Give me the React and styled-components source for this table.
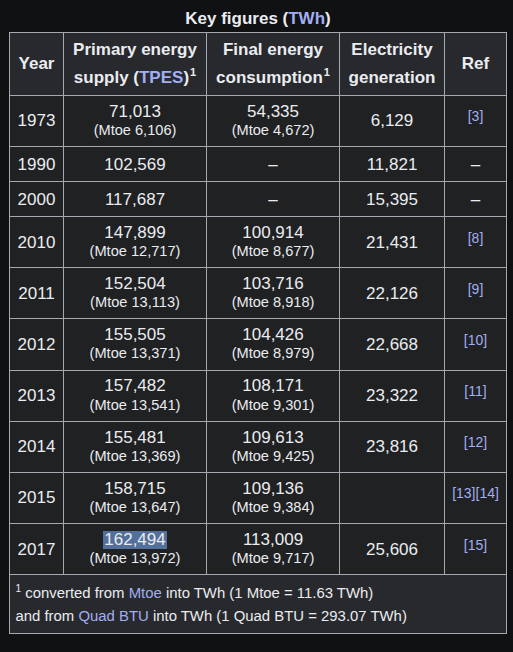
import React from "react";
import styled, { createGlobalStyle } from "styled-components";

const Global = createGlobalStyle`
  html, body { margin: 0; padding: 0; background: #101112; }
  body { font-family: "Liberation Sans", Arial, Helvetica, sans-serif; color: #eaecf0; }
`;

const Page = styled.div`
  padding: 5px 6px 0 9px;
  width: 498px;
`;

const Table = styled.table`
  border-collapse: collapse;
  table-layout: fixed;
  width: 498px;
  font-size: 17px;
  line-height: 27.2px;
  color: #eaecf0;
`;

const Caption = styled.caption`
  font-weight: bold;
  text-align: center;
  line-height: 27px;
  padding: 0;
`;

const Link = styled.span`
  color: #a2aef2;
`;

const Th = styled.th`
  background: #27292d;
  border: 1px solid #a2a9b1;
  padding: 3.4px 5px;
  font-weight: bold;
  text-align: center;
  vertical-align: middle;
  line-height: 27.6px;
`;

const Td = styled.td`
  background: #202122;
  border: 1px solid #a2a9b1;
  padding: 3.4px 6.8px;
  text-align: center;
  vertical-align: middle;
  white-space: nowrap;
`;

const Stack = styled.div`
  padding: 3.4px 0;
  display: flex;
  flex-direction: column;
  align-items: center;
`;

const Main = styled.span`
  line-height: 18.3px;
  font-size: 17px;
  padding: 0 1.5px;
  background: ${(p) => (p.$selected ? "#52709b" : "transparent")};
`;

const Small = styled.span`
  line-height: 18.3px;
  font-size: 14.6px;
`;

const Sup = styled.sup`
  font-size: ${(p) => p.$size || "11px"};
  line-height: 1;
  margin-left: ${(p) => p.$gap || "1px"};
  vertical-align: ${(p) => p.$shift || "7px"};
`;

const Ref = styled.span`
  color: #a2aef2;
  font-size: 14px;
  line-height: 1;
  vertical-align: 5px;
`;

const FootCell = styled.td`
  background: #27292d;
  border: 1px solid #a2a9b1;
  padding: 6.5px 5.5px 5.5px;
  font-size: 14.9px;
  line-height: 23px;
  text-align: left;
`;

const rows = [
  ["1973", ["71,013", "(Mtoe 6,106)"], ["54,335", "(Mtoe 4,672)"], "6,129", "[3]"],
  ["1990", "102,569", "–", "11,821", "–"],
  ["2000", "117,687", "–", "15,395", "–"],
  ["2010", ["147,899", "(Mtoe 12,717)"], ["100,914", "(Mtoe 8,677)"], "21,431", "[8]"],
  ["2011", ["152,504", "(Mtoe 13,113)"], ["103,716", "(Mtoe 8,918)"], "22,126", "[9]"],
  ["2012", ["155,505", "(Mtoe 13,371)"], ["104,426", "(Mtoe 8,979)"], "22,668", "[10]"],
  ["2013", ["157,482", "(Mtoe 13,541)"], ["108,171", "(Mtoe 9,301)"], "23,322", "[11]"],
  ["2014", ["155,481", "(Mtoe 13,369)"], ["109,613", "(Mtoe 9,425)"], "23,816", "[12]"],
  ["2015", ["158,715", "(Mtoe 13,647)"], ["109,136", "(Mtoe 9,384)"], "", "[13][14]"],
  ["2017", ["162,494", "(Mtoe 13,972)", true], ["113,009", "(Mtoe 9,717)"], "25,606", "[15]"],
];

function Value({ v }) {
  if (Array.isArray(v)) {
    return (
      <Stack>
        <Main $selected={v[2]}>{v[0]}</Main>
        <Small>{v[1]}</Small>
      </Stack>
    );
  }
  return v;
}

export default function App() {
  return (
    <Page>
      <Global />
      <Table>
        <Caption>
          Key figures (<Link>TWh</Link>)
        </Caption>
        <colgroup>
          <col style={{ width: 54 }} />
          <col style={{ width: 143 }} />
          <col style={{ width: 133 }} />
          <col style={{ width: 105 }} />
          <col style={{ width: 62 }} />
        </colgroup>
        <thead>
          <tr>
            <Th>Year</Th>
            <Th>
              Primary energy supply (<Link>TPES</Link>)<Sup>1</Sup>
            </Th>
            <Th>
              Final energy consumption<Sup>1</Sup>
            </Th>
            <Th>Electricity generation</Th>
            <Th>Ref</Th>
          </tr>
        </thead>
        <tbody>
          {rows.map((r) => (
            <tr key={r[0]}>
              <Td>{r[0]}</Td>
              <Td><Value v={r[1]} /></Td>
              <Td><Value v={r[2]} /></Td>
              <Td>{r[3]}</Td>
              <Td>{r[4].startsWith("[") ? <Ref>{r[4]}</Ref> : r[4]}</Td>
            </tr>
          ))}
          <tr>
            <FootCell colSpan={5}>
              <Sup $size="10px" $shift="6px" $gap="0">1</Sup> converted from <Link>Mtoe</Link> into TWh (1 Mtoe = 11.63 TWh)
              <br />
              and from <Link>Quad BTU</Link> into TWh (1 Quad BTU = 293.07 TWh)
            </FootCell>
          </tr>
        </tbody>
      </Table>
    </Page>
  );
}
